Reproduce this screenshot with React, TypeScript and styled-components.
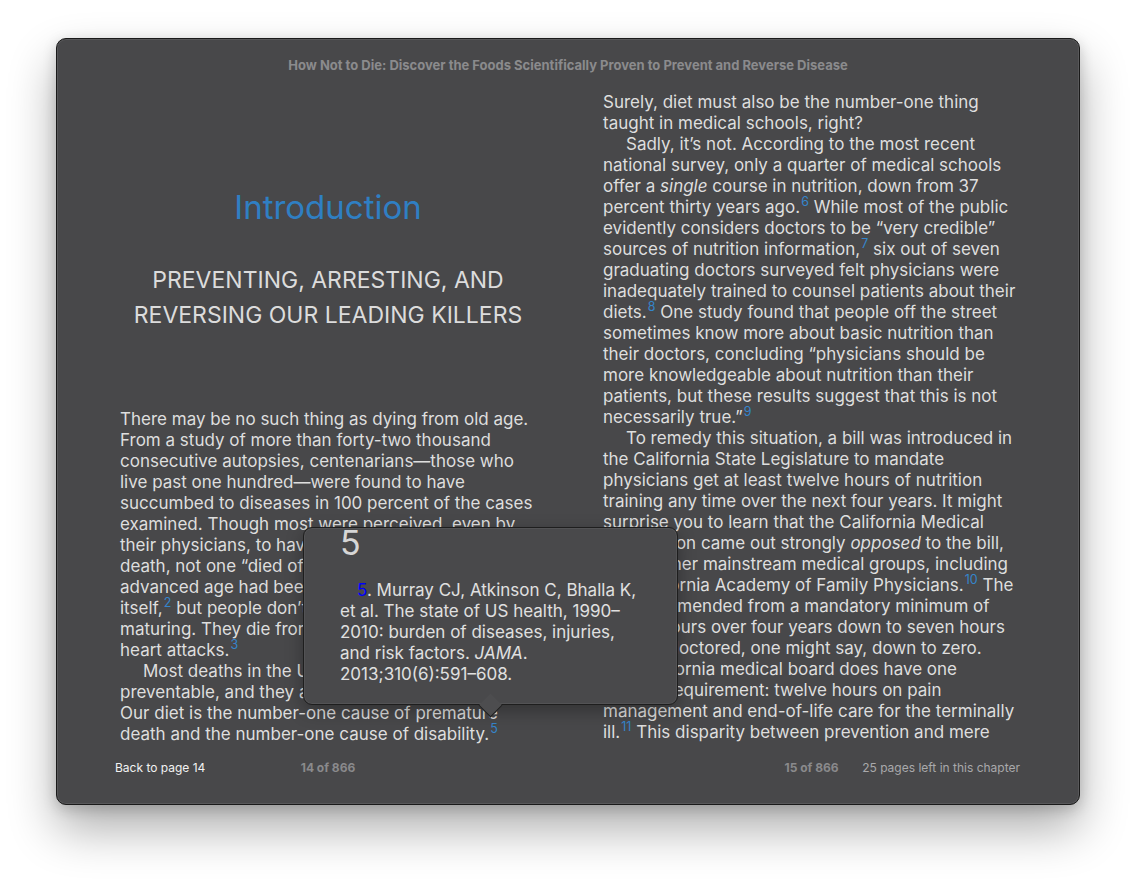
import { createGlobalStyle, styled } from "styled-components"

const GlobalStyle = createGlobalStyle`
  html, body {
    margin: 0;
    background: #ffffff;
  }
  body {
    font-family: Inter, "Noto Sans", sans-serif;
    -webkit-font-smoothing: antialiased;
  }
`

const Stage = styled.div`
  width: 1136px;
  height: 880px;
  padding: 38px 0 0 56px;
  box-sizing: border-box;
`

const Window = styled.div`
  position: relative;
  width: 1024px;
  height: 767px;
  box-sizing: border-box;
  background: #48484a;
  border: 1px solid #1a1a1a;
  border-radius: 10px;
  box-shadow: 0 24px 48px rgba(0, 0, 0, 0.32), 0 4px 14px rgba(0, 0, 0, 0.18),
    inset 0 0 0 1px rgba(255, 255, 255, 0.09);
  display: flex;
  flex-direction: column;
`

const Header = styled.div`
  height: 53px;
  box-sizing: border-box;
  padding-top: 19px;
  text-align: center;
  font-size: 13px;
  line-height: 14px;
  font-weight: 700;
  color: #8b8b8d;
`

const Spread = styled.div`
  display: grid;
  grid-template-columns: 416px 417px;
  column-gap: 67px;
  padding: 0 59px 0 63px;
`

const Column = styled.div`
  font-size: 17px;
  line-height: 21px;
  color: #dedede;
  white-space: nowrap;
`

const ChapterTitle = styled.h1`
  margin: 95px 0 0;
  font-size: 33px;
  line-height: 40px;
  font-weight: 400;
  color: #2f7fc3;
  text-align: center;
`

const ChapterSub = styled.h2`
  margin: 36px 0 76px;
  font-size: 23px;
  line-height: 35px;
  font-weight: 400;
  color: #dcdcdc;
  text-align: center;
`

const Para = styled.p<{ $indent?: boolean }>`
  margin: 0;
  text-indent: ${(p) => (p.$indent ? "23px" : "0")};
`

const Ref = styled.sup`
  font-size: 12.5px;
  line-height: 0;
  color: #3585cb;
  vertical-align: baseline;
  position: relative;
  top: -0.6em;
  margin-left: 1px;
`

const Footer = styled.div`
  display: grid;
  grid-template-columns: 416px 417px;
  column-gap: 67px;
  padding: 0 59px 0 63px;
  margin-top: 16px;
  font-size: 12px;
  line-height: 14px;
`

const FooterSide = styled.div`
  display: grid;
  grid-template-columns: 1fr auto 1fr;
  align-items: center;
`

const BackLink = styled.span`
  margin-left: -5px;
  color: #f2f2f2;
`

const PageNo = styled.span`
  font-weight: 700;
  color: #8a8a8c;
`

const Remaining = styled.span`
  justify-self: end;
  color: #a9a9ab;
`

const Popover = styled.div`
  position: absolute;
  left: 246px;
  top: 488px;
  width: 375px;
  height: 178px;
  box-sizing: border-box;
  background: #49494b;
  border: 1px solid #1e1e1e;
  border-radius: 9px;
  box-shadow: 0 6px 18px rgba(0, 0, 0, 0.3), inset 0 0 0 1px rgba(255, 255, 255, 0.06);

  &::after {
    content: "";
    position: absolute;
    left: 178px;
    top: 169px;
    width: 16px;
    height: 16px;
    background: #4d4d4f;
    border-right: 1px solid #1e1e1e;
    border-bottom: 1px solid #1e1e1e;
    transform: rotate(45deg);
  }
`

const PopoverBody = styled.div`
  position: relative;
  z-index: 1;
  height: 100%;
  overflow: hidden;
  border-radius: 9px;
  padding-left: 36px;
  color: #e0e0e0;
  white-space: nowrap;
`

const NoteNumber = styled.div`
  font-size: 34px;
  line-height: 30px;
  color: #d6d6d6;
`

const Note = styled.p`
  margin: 22px 0 0;
  font-size: 17px;
  line-height: 21px;
  text-indent: 17px;
`

const NoteLink = styled.span`
  color: #0000ff;
`

export default function App() {
  return (
    <>
      <GlobalStyle />
      <Stage>
        <Window>
          <Header>How Not to Die: Discover the Foods Scientifically Proven to Prevent and Reverse Disease</Header>
          <Spread>
            <Column>
              <ChapterTitle>Introduction</ChapterTitle>
              <ChapterSub>
                PREVENTING, ARRESTING, AND
                <br />
                REVERSING OUR LEADING KILLERS
              </ChapterSub>
              <Para>
                There may be no such thing as dying from old age.
                <br />
                From a study of more than forty-two thousand
                <br />
                consecutive autopsies, centenarians—those who
                <br />
                live past one hundred—were found to have
                <br />
                succumbed to diseases in 100 percent of the cases
                <br />
                examined. Though most were perceived, even by
                <br />
                their physicians, to have been healthy at the time of
                <br />
                death, not one “died of old age.”<Ref>1</Ref> Until recently,
                <br />
                advanced age had been considered a cause of death in
                <br />
                itself,<Ref>2</Ref> but people don’t die of old age just from
                <br />
                maturing. They die from disease, most commonly
                <br />
                heart attacks.<Ref>3</Ref>
              </Para>
              <Para $indent>
                Most deaths in the United States are
                <br />
                preventable, and they are related to what we eat.<Ref>4</Ref>
                <br />
                Our diet is the number-one cause of premature
                <br />
                death and the number-one cause of disability.<Ref>5</Ref>
              </Para>
            </Column>
            <Column>
              <Para>
                Surely, diet must also be the number-one thing
                <br />
                taught in medical schools, right?
              </Para>
              <Para $indent>
                Sadly, it’s not. According to the most recent
                <br />
                national survey, only a quarter of medical schools
                <br />
                offer a <i>single</i> course in nutrition, down from 37
                <br />
                percent thirty years ago.<Ref>6</Ref> While most of the public
                <br />
                evidently considers doctors to be “very credible”
                <br />
                sources of nutrition information,<Ref>7</Ref> six out of seven
                <br />
                graduating doctors surveyed felt physicians were
                <br />
                inadequately trained to counsel patients about their
                <br />
                diets.<Ref>8</Ref> One study found that people off the street
                <br />
                sometimes know more about basic nutrition than
                <br />
                their doctors, concluding “physicians should be
                <br />
                more knowledgeable about nutrition than their
                <br />
                patients, but these results suggest that this is not
                <br />
                necessarily true.”<Ref>9</Ref>
              </Para>
              <Para $indent>
                To remedy this situation, a bill was introduced in
                <br />
                the California State Legislature to mandate
                <br />
                physicians get at least twelve hours of nutrition
                <br />
                training any time over the next four years. It might
                <br />
                surprise you to learn that the California Medical
                <br />
                Association came out strongly <i>opposed</i> to the bill,
                <br />
                as did other mainstream medical groups, including
                <br />
                the California Academy of Family Physicians.<Ref>10</Ref> The
                <br />
                bill was amended from a mandatory minimum of
                <br />
                twelve hours over four years down to seven hours
                <br />
                —or, as doctored, one might say, down to zero.
                <br />
                The California medical board does have one
                <br />
                curious requirement: twelve hours on pain
                <br />
                management and end-of-life care for the terminally
                <br />
                ill.<Ref>11</Ref> This disparity between prevention and mere
              </Para>
            </Column>
          </Spread>
          <Footer>
            <FooterSide>
              <BackLink>Back to page 14</BackLink>
              <PageNo>14 of 866</PageNo>
              <span />
            </FooterSide>
            <FooterSide>
              <span />
              <PageNo>15 of 866</PageNo>
              <Remaining>25 pages left in this chapter</Remaining>
            </FooterSide>
          </Footer>
          <Popover>
            <PopoverBody>
              <NoteNumber>5</NoteNumber>
              <Note>
                <NoteLink>5</NoteLink>. Murray CJ, Atkinson C, Bhalla K,
                <br />
                et al. The state of US health, 1990–
                <br />
                2010: burden of diseases, injuries,
                <br />
                and risk factors. <i>JAMA</i>.
                <br />
                2013;310(6):591–608.
              </Note>
            </PopoverBody>
          </Popover>
        </Window>
      </Stage>
    </>
  )
}
